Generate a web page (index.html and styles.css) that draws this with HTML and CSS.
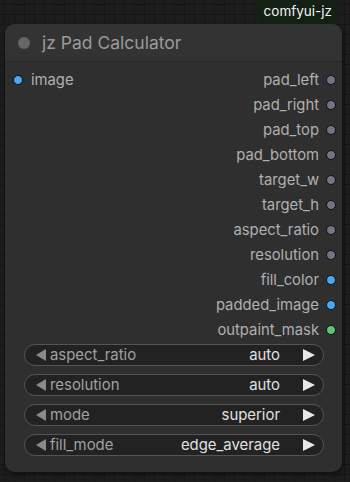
FILE: index.html
```html
<!DOCTYPE html>
<html lang="en">
  <head>
    <meta charset="UTF-8" />
    <title>jz Pad Calculator</title>
    <link rel="stylesheet" href="styles.css">
  </head>
  <body>
    <div class="canvas">
      <div class="badgeRow">
        <span class="badge">comfyui-jz</span>
      </div>

      <div class="node">
        <div class="title">
          <span class="titleDot"></span>
          <span class="titleText">jz Pad Calculator</span>
        </div>

        <div class="slots">
          <div class="slotRow">
            <div class="inSlot"><span class="dot blue"></span>image</div>
            <div class="outSlot">pad_left<span class="dot grey"></span></div>
          </div>
          <div class="slotRow">
            <div></div>
            <div class="outSlot">pad_right<span class="dot grey"></span></div>
          </div>
          <div class="slotRow">
            <div></div>
            <div class="outSlot">pad_top<span class="dot grey"></span></div>
          </div>
          <div class="slotRow">
            <div></div>
            <div class="outSlot">pad_bottom<span class="dot grey"></span></div>
          </div>
          <div class="slotRow">
            <div></div>
            <div class="outSlot">target_w<span class="dot grey"></span></div>
          </div>
          <div class="slotRow">
            <div></div>
            <div class="outSlot">target_h<span class="dot grey"></span></div>
          </div>
          <div class="slotRow">
            <div></div>
            <div class="outSlot">aspect_ratio<span class="dot grey"></span></div>
          </div>
          <div class="slotRow">
            <div></div>
            <div class="outSlot">resolution<span class="dot grey"></span></div>
          </div>
          <div class="slotRow">
            <div></div>
            <div class="outSlot">fill_color<span class="dot blue"></span></div>
          </div>
          <div class="slotRow">
            <div></div>
            <div class="outSlot">padded_image<span class="dot blue"></span></div>
          </div>
          <div class="slotRow">
            <div></div>
            <div class="outSlot">outpaint_mask<span class="dot green"></span></div>
          </div>
        </div>

        <div class="widgets">
          <div class="combo">
            <span class="arrowLeft"></span>
            <span class="comboLabel">aspect_ratio</span>
            <span class="comboValue">auto</span>
            <span class="arrowRight"></span>
          </div>
          <div class="combo">
            <span class="arrowLeft"></span>
            <span class="comboLabel">resolution</span>
            <span class="comboValue">auto</span>
            <span class="arrowRight"></span>
          </div>
          <div class="combo">
            <span class="arrowLeft"></span>
            <span class="comboLabel">mode</span>
            <span class="comboValue">superior</span>
            <span class="arrowRight"></span>
          </div>
          <div class="combo">
            <span class="arrowLeft"></span>
            <span class="comboLabel">fill_mode</span>
            <span class="comboValue">edge_average</span>
            <span class="arrowRight"></span>
          </div>
        </div>
      </div>
    </div>
  </body>
</html>
```

FILE: styles.css
```css
body {
  margin: 0;
  font-family: "Inter", "Liberation Sans", sans-serif;
}
.canvas {
  width: 350px;
  height: 482px;
  overflow: hidden;
  background-color: #1d1d1d;
  background-image:
    linear-gradient(to right, #161616 1px, transparent 1px),
    linear-gradient(to bottom, #161616 1px, transparent 1px);
  background-size: 10px 10px;
  background-position: 4px 4px;
}
.badgeRow {
  display: flex;
  justify-content: flex-end;
  padding-right: 12px;
  height: 24px;
}
.badge {
  background-color: #142014;
  color: #f2f2f2;
  font-size: 13.5px;
  line-height: 22px;
  padding: 0 6px;
  border-radius: 0 0 4px 4px;
}
.node {
  margin-left: 5px;
  width: 337px;
  height: 448px;
  background-color: #2f2f2f;
  border-radius: 10px;
  box-shadow: 1px 2px 4px rgba(0, 0, 0, 0.5);
  overflow: hidden;
}
.title {
  height: 37px;
  display: flex;
  align-items: center;
  background-color: #333333;
  border-bottom: 1px solid #2a2a2a;
}
.titleDot {
  width: 12px;
  height: 12px;
  border-radius: 50%;
  background-color: #666666;
  margin-left: 13px;
  margin-right: 12px;
}
.titleText {
  color: #9a9a9a;
  font-size: 17.5px;
}
.slots {
  padding-top: 5px;
}
.slotRow {
  height: 25.1px;
  display: flex;
  justify-content: space-between;
  align-items: center;
  font-size: 14.8px;
  color: #b0b0b0;
}
.inSlot {
  display: flex;
  align-items: center;
  padding-left: 8px;
}
.inSlot .dot {
  margin-right: 8px;
}
.outSlot {
  display: flex;
  align-items: center;
  padding-right: 6px;
}
.outSlot .dot {
  margin-left: 7px;
}
.dot {
  width: 8px;
  height: 8px;
  border-radius: 50%;
  border: 1px solid #111;
}
.dot.blue {
  background-color: #4ba8f0;
}
.dot.grey {
  background-color: #747486;
}
.dot.green {
  background-color: #62c17a;
}
.widgets {
  display: flex;
  flex-direction: column;
  gap: 8px;
  padding: 1px 0 0 19px;
}
.combo {
  width: 298px;
  height: 20px;
  border: 1px solid #545454;
  border-radius: 11px;
  background-color: #222222;
  display: flex;
  align-items: center;
  font-size: 14.9px;
}
.arrowLeft {
  width: 0;
  height: 0;
  border-top: 6px solid transparent;
  border-bottom: 6px solid transparent;
  border-right: 10px solid #8a8a8a;
  margin-left: 11px;
  margin-right: 4px;
}
.comboLabel {
  color: #a0a0a0;
  flex: 1;
}
.comboValue {
  color: #e0e0e0;
}
.arrowRight {
  width: 0;
  height: 0;
  border-top: 6px solid transparent;
  border-bottom: 6px solid transparent;
  border-left: 12px solid #e8e8e8;
  margin-left: 23px;
  margin-right: 8px;
}
```
